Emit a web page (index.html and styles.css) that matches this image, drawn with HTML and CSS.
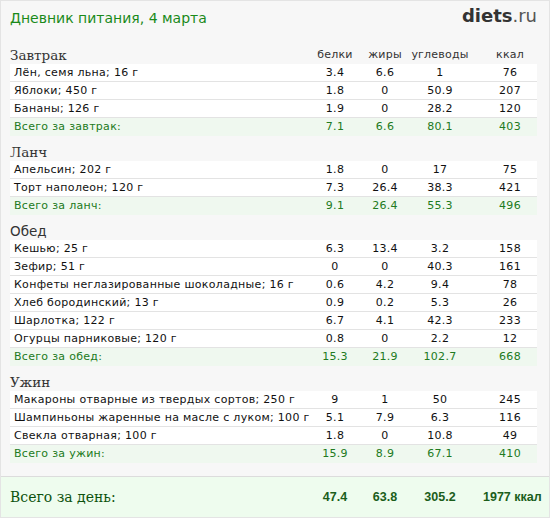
FILE: index.html
```html
<!DOCTYPE html>
<html lang="ru">
<head>
<meta charset="utf-8">
<title>Дневник питания</title>
<link rel="stylesheet" href="styles.css">
</head>
<body>
<div class="page">
  <div class="top">
    <div class="title">Дневник питания, 4 марта</div>
    <div class="logo"><b>diets</b>.ru</div>
  </div>
  <div class="meals">
    <div class="section">
      <div class="grid head"><div class="meal">Завтрак</div><div>белки</div><div>жиры</div><div>углеводы</div><div class="kc">ккал</div></div>
      <div class="grid row"><div class="name">Лён, семя льна; 16 г</div><div>3.4</div><div>6.6</div><div>1</div><div class="kc">76</div></div>
      <div class="grid row"><div class="name">Яблоки; 450 г</div><div>1.8</div><div>0</div><div>50.9</div><div class="kc">207</div></div>
      <div class="grid row"><div class="name">Бананы; 126 г</div><div>1.9</div><div>0</div><div>28.2</div><div class="kc">120</div></div>
      <div class="grid row total"><div class="name">Всего за завтрак:</div><div>7.1</div><div>6.6</div><div>80.1</div><div class="kc">403</div></div>
    </div>
    <div class="section">
      <div class="grid head"><div class="meal">Ланч</div></div>
      <div class="grid row"><div class="name">Апельсин; 202 г</div><div>1.8</div><div>0</div><div>17</div><div class="kc">75</div></div>
      <div class="grid row"><div class="name">Торт наполеон; 120 г</div><div>7.3</div><div>26.4</div><div>38.3</div><div class="kc">421</div></div>
      <div class="grid row total"><div class="name">Всего за ланч:</div><div>9.1</div><div>26.4</div><div>55.3</div><div class="kc">496</div></div>
    </div>
    <div class="section">
      <div class="grid head"><div class="meal meal-sans">Обед</div></div>
      <div class="grid row"><div class="name">Кешью; 25 г</div><div>6.3</div><div>13.4</div><div>3.2</div><div class="kc">158</div></div>
      <div class="grid row"><div class="name">Зефир; 51 г</div><div>0</div><div>0</div><div>40.3</div><div class="kc">161</div></div>
      <div class="grid row"><div class="name">Конфеты неглазированные шоколадные; 16 г</div><div>0.6</div><div>4.2</div><div>9.4</div><div class="kc">78</div></div>
      <div class="grid row"><div class="name">Хлеб бородинский; 13 г</div><div>0.9</div><div>0.2</div><div>5.3</div><div class="kc">26</div></div>
      <div class="grid row"><div class="name">Шарлотка; 122 г</div><div>6.7</div><div>4.1</div><div>42.3</div><div class="kc">233</div></div>
      <div class="grid row"><div class="name">Огурцы парниковые; 120 г</div><div>0.8</div><div>0</div><div>2.2</div><div class="kc">12</div></div>
      <div class="grid row total"><div class="name">Всего за обед:</div><div>15.3</div><div>21.9</div><div>102.7</div><div class="kc">668</div></div>
    </div>
    <div class="section">
      <div class="grid head"><div class="meal">Ужин</div></div>
      <div class="grid row"><div class="name">Макароны отварные из твердых сортов; 250 г</div><div>9</div><div>1</div><div>50</div><div class="kc">245</div></div>
      <div class="grid row"><div class="name">Шампиньоны жаренные на масле с луком; 100 г</div><div>5.1</div><div>7.9</div><div>6.3</div><div class="kc">116</div></div>
      <div class="grid row"><div class="name">Свекла отварная; 100 г</div><div>1.8</div><div>0</div><div>10.8</div><div class="kc">49</div></div>
      <div class="grid row total"><div class="name">Всего за ужин:</div><div>15.9</div><div>8.9</div><div>67.1</div><div class="kc">410</div></div>
    </div>
  </div>
  <div class="day">
    <div class="grid daygrid"><div class="day-label">Всего за день:</div><div>47.4</div><div>63.8</div><div>305.2</div><div class="kc day-kc">1977 ккал</div></div>
  </div>
</div>
</body>
</html>
```

FILE: styles.css
```css
html, body {
  margin: 0;
  padding: 0;
  background: #ffffff;
}

.page {
  width: 550px;
  height: 518px;
  box-sizing: border-box;
  border: 1px solid #e4e4e4;
  background: #f7f7f7;
  display: flex;
  flex-direction: column;
  font-family: "DejaVu Sans", Verdana, sans-serif;
  font-size: 11px;
  color: #111;
}

.top {
  height: 38px;
  padding: 0 12px 0 9px;
  display: flex;
  justify-content: space-between;
  align-items: flex-start;
}

.title {
  margin-top: 8px;
  font-size: 14px;
  line-height: 18px;
  color: #1a8a1a;
}

.logo {
  margin-top: 5px;
  font-family: "DejaVu Sans", sans-serif;
  font-size: 18px;
  line-height: 20px;
  color: #555;
}

.logo b {
  color: #333;
  font-weight: bold;
}

.meals {
  padding: 0 12px 0 9px;
}

.grid {
  display: grid;
  grid-template-columns: 1fr 50px 50px 60px 67px;
  text-align: center;
}

.grid .kc {
  padding-left: 13px;
}

.head {
  height: 25px;
  align-items: end;
  color: #333;
  line-height: 16px;
  box-sizing: border-box;
  padding-bottom: 1px;
  letter-spacing: 0.2px;
}

.meal {
  text-align: left;
  font-family: "DejaVu Serif", Georgia, serif;
  font-size: 13.5px;
  letter-spacing: 0;
  color: #333;
}

.meal-sans {
  font-family: "DejaVu Sans", Verdana, sans-serif;
}

.row {
  height: 18px;
  box-sizing: border-box;
  line-height: 17px;
  background: #ffffff;
  border-bottom: 1px solid #e3e3e3;
  letter-spacing: 0.3px;
}

.row .name {
  text-align: left;
  padding-left: 4px;
  white-space: nowrap;
}

.row.total {
  background: #eff8ef;
  border-bottom: none;
  color: #217a21;
}

.day {
  margin-top: auto;
  height: 41px;
  box-sizing: border-box;
  border-top: 1px solid #dcdcdc;
  background: #eefcee;
  padding: 0 12px 0 9px;
  display: flex;
  flex-direction: column;
  justify-content: center;
}

.daygrid {
  align-items: center;
  font-family: "Liberation Sans", Arial, sans-serif;
  font-weight: bold;
  font-size: 12.5px;
  color: #1b5e1b;
}

.day-kc {
  white-space: nowrap;
}

.day-label {
  text-align: left;
  font-family: "DejaVu Serif", Georgia, serif;
  font-weight: normal;
  font-size: 14px;
  color: #0d520d;
}
```
